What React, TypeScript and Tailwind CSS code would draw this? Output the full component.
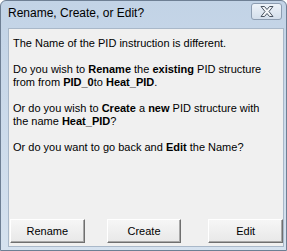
const Btn = ({ label, className }: { label: string; className?: string }) => (
    <button
        className={
            "w-[75px] h-[24px] flex items-center justify-center text-[11px] text-black bg-gradient-to-b from-[#f6f6f6] to-[#e8e8e8] border border-t-white border-l-white border-r-[#6f6f6f] border-b-[#6f6f6f] shadow-[inset_-1px_-1px_0_#a8a8a8] " +
            (className ?? "")
        }
    >
        {label}
    </button>
);

const CloseGlyph = () => (
    <svg width="14" height="11" viewBox="0 0 14 11">
        <polygon
            points="1,0.5 4.5,0.5 7,3.5 9.5,0.5 13,0.5 9,5.5 13,10.5 9.5,10.5 7,7.5 4.5,10.5 1,10.5 5,5.5"
            fill="#f4f6f9"
            stroke="#4a5461"
            strokeWidth="1"
            strokeLinejoin="round"
        />
    </svg>
);

export default function App() {
    return (
        <div className="w-[287px] h-[251px] bg-white overflow-hidden" style={{ fontFamily: "'Liberation Sans', Arial, sans-serif" }}>
            <div className="w-full h-full flex flex-col rounded-t-[6px] border border-[#6e7f94] bg-gradient-to-b from-[#c2d3e6] to-[#d6e2ef]">
                {/* title bar */}
                <div className="h-[27px] flex items-center justify-between pl-[7px] pr-[4px] shrink-0">
                    <span className="text-[12px] text-black -mt-[3px]">Rename, Create, or Edit?</span>
                    <div className="w-[31px] h-[17px] -mt-[6px] rounded-[3px] border border-[#8d9db1] bg-gradient-to-b from-[#eef3f9] to-[#d3deeb] flex items-center justify-center">
                        <CloseGlyph />
                    </div>
                </div>

                {/* client area */}
                <div className="flex-1 mx-[7px] mb-[3px] mr-[2px] bg-[#f0f0f0] border border-[#a9b8c9] flex flex-col text-[11px] leading-[13px] text-black">
                    <div className="pl-[4px] pt-[8px] flex flex-col gap-[13px]">
                        <p>The Name of the PID instruction is different.</p>
                        <p>
                            Do you wish to <b>Rename</b> the <b>existing</b> PID structure
                            <br />
                            from from <b>PID_0</b>to <b>Heat_PID</b>.
                        </p>
                        <p>
                            Or do you wish to <b>Create</b> a <b>new</b> PID structure with
                            <br />
                            the name <b>Heat_PID</b>?
                        </p>
                        <p>
                            Or do you want to go back and <b>Edit</b> the Name?
                        </p>
                    </div>

                    <div className="mt-auto mb-[3px] flex items-center">
                        <Btn label="Rename" className="ml-[1px]" />
                        <Btn label="Create" className="ml-[22px]" />
                        <Btn label="Edit" className="ml-[27px]" />
                    </div>
                </div>
            </div>
        </div>
    );
}
